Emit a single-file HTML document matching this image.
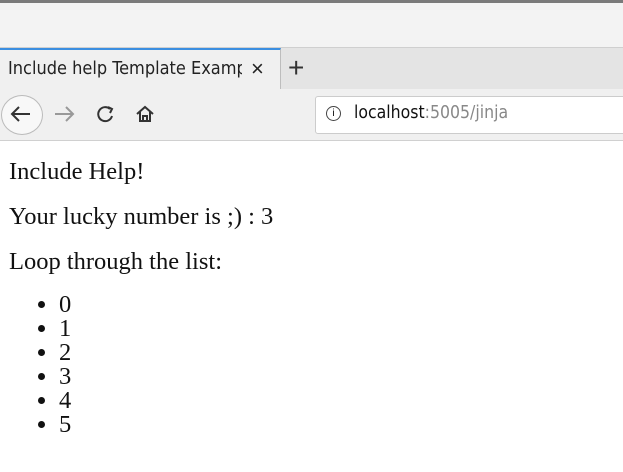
<!DOCTYPE html>
<html><head><style>
body{margin:0;width:623px;height:472px;overflow:hidden;background:#fff;position:relative;font-family:"Liberation Serif",serif}
.a{position:absolute}
.p{position:absolute;left:9px;font-size:24.5px;line-height:24px;color:#111}
</style></head><body>
<div class="a" style="left:0;top:0;width:623px;height:3px;background:#7a7a7a"></div>
<div class="a" style="left:0;top:3px;width:623px;height:44px;background:#f3f3f3"></div>
<div class="a" style="left:0;top:47px;width:623px;height:42px;background:#e4e4e4;border-top:1px solid #cfcfcf"></div>
<div class="a" style="left:0;top:48px;width:280px;height:42px;background:#f0f0f0;border-top:2px solid #3b8ee0;border-right:1px solid #bdbdbd"></div>
<div class="a" style="left:8px;top:58px;font:18px 'DejaVu Sans Condensed','Liberation Sans',sans-serif;color:#222;white-space:nowrap;width:234px;overflow:hidden">Include help Template Examp</div>
<div class="a" style="left:251px;top:56px;font:22px 'Liberation Sans',sans-serif;color:#222">×</div>
<div class="a" style="left:288px;top:52px;font:28px 'Liberation Sans',sans-serif;color:#333">+</div>
<div class="a" style="left:0;top:89px;width:623px;height:51px;background:#f0f0f0;border-bottom:1px solid #d0d0d0"></div>
<div class="a" style="left:1px;top:95px;width:40px;height:38px;border:1px solid #bbb;border-radius:50%;background:#f8f8f8"></div>
<svg class="a" style="left:0;top:89px" width="180" height="52"><g fill="none" stroke-width="2"><path d="M12 25h18M19 18l-7 7 7 7" stroke="#333"/><path d="M55 25h18M66 18l7 7-7 7" stroke="#999"/><path d="M110 20a7 7 0 1 0 2 7" stroke="#333"/><path d="M108 18l4 2-2 4" stroke="#333"/><path d="M137 25l8-7 8 7M140 23v9h10v-9M143 32v-5h4v5" stroke="#333"/></g></svg>
<div class="a" style="left:315px;top:96px;width:310px;height:36px;background:#fff;border:1px solid #ccc;border-radius:3px"></div>
<div class="a" style="left:326px;top:106px;width:13px;height:13px;border:1px solid #444;border-radius:50%;font:10px 'Liberation Sans';text-align:center;line-height:13px">i</div>
<div class="a" style="left:354px;top:103px;font:17.5px 'DejaVu Sans Condensed','Liberation Sans',sans-serif;color:#111">localhost<span style="color:#888">:5005/jinja</span></div>
<div class="p" style="top:160px">Include Help!</div>
<div class="p" style="top:205px">Your lucky number is ;) : 3</div>
<div class="p" style="top:250px">Loop through the list:</div>
<ul class="p" style="top:293px;margin:0;padding-left:59px;left:0">
<li>0</li><li>1</li><li>2</li><li>3</li><li>4</li><li>5</li></ul>
</body></html>
